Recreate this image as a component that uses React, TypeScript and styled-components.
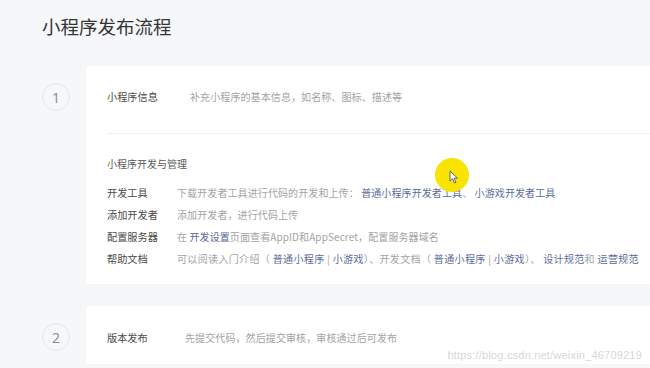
import React from 'react';
import styled, { createGlobalStyle } from 'styled-components';

const GlobalStyle = createGlobalStyle`
  html, body {
    margin: 0;
    padding: 0;
    background: #f6f7f9;
    overflow: hidden;
  }
  body {
    font-family: "Noto Sans CJK SC", "Noto Sans", sans-serif;
  }
`;

const Page = styled.div`
  position: relative;
  width: 650px;
  height: 368px;
  overflow: hidden;
  background: #f6f7f9;
`;

const Title = styled.h1`
  margin: 0;
  padding: 13px 0 0 42px;
  height: 26px;
  line-height: 26px;
  font-size: 18.5px;
  font-weight: 400;
  color: #353535;
`;

const Steps = styled.div`
  display: flex;
  flex-direction: column;
  gap: 22px;
  margin-top: 27px;
`;

const Step = styled.div`
  display: flex;
  align-items: flex-start;
`;

const IndexCol = styled.div`
  width: 86px;
  flex-shrink: 0;
  padding-top: 17px;
`;

const Circle = styled.div`
  margin-left: 42px;
  width: 26px;
  height: 26px;
  border: 1.5px solid #e4e5e8;
  border-radius: 50%;
  display: flex;
  align-items: center;
  justify-content: center;
  font-family: "Open Sans", "Noto Sans", sans-serif;
  font-size: 14px;
  color: #8a8a8a;
  background: #f6f7f9;
`;

const Card = styled.div<{ $top: number; $bottom: number }>`
  width: 620px;
  flex-shrink: 0;
  background: #fff;
  border-radius: 3px;
  padding: ${(p) => p.$top}px 0 ${(p) => p.$bottom}px 21px;
  box-shadow: 0 1px 2px rgba(0, 0, 0, 0.02);
`;

const Line = styled.div<{ $lh: number }>`
  display: flex;
  white-space: nowrap;
  line-height: ${(p) => p.$lh}px;
  font-size: 10px;
`;

const Label = styled.span<{ $w: number }>`
  width: ${(p) => p.$w}px;
  flex-shrink: 0;
  color: #4a4a4a;
  font-size: 10.2px;
`;

const Desc = styled.span<{ $ls?: number }>`
  color: #a3a3a3;
  letter-spacing: ${(p) => p.$ls ?? 0.1}px;
`;

const Link = styled.span`
  color: #5b6b99;
`;

const Divider = styled.div`
  height: 1px;
  background: #f0f0f2;
  margin: 27px 0 0 0;
`;

const SectionHead = styled.div`
  margin-top: 21px;
  line-height: 18px;
  font-size: 10px;
  color: #5a5a5a;
`;

const Rows = styled.div`
  margin-top: 9px;
`;

const Highlight = styled.div`
  position: absolute;
  left: 435px;
  top: 158px;
  width: 34px;
  height: 34px;
  border-radius: 50%;
  background: #f9e300;
`;

const Pointer = styled.svg`
  position: absolute;
  left: 449px;
  top: 170px;
`;

const Watermark = styled.div`
  position: absolute;
  right: 8px;
  bottom: 7px;
  font-family: "Liberation Sans", Arial, sans-serif;
  font-size: 11px;
  color: rgba(200, 200, 205, 0.75);
  letter-spacing: 0.2px;
`;

const App: React.FC = () => {
  return (
    <Page>
      <GlobalStyle />
      <Title>小程序发布流程</Title>
      <Steps>
        <Step>
          <IndexCol>
            <Circle>1</Circle>
          </IndexCol>
          <Card $top={22} $bottom={14}>
            <Line $lh={18}>
              <Label $w={83}>小程序信息</Label>
              <Desc>补充小程序的基本信息，如名称、图标、描述等</Desc>
            </Line>
            <Divider />
            <SectionHead>小程序开发与管理</SectionHead>
            <Rows>
              <Line $lh={22}>
                <Label $w={70}>开发工具</Label>
                <Desc>
                  下载开发者工具进行代码的开发和上传： <Link>普通小程序开发者工具</Link>、 <Link>小游戏开发者工具</Link>
                </Desc>
              </Line>
              <Line $lh={22}>
                <Label $w={70}>添加开发者</Label>
                <Desc>添加开发者，进行代码上传</Desc>
              </Line>
              <Line $lh={22}>
                <Label $w={70}>配置服务器</Label>
                <Desc>
                  在 <Link>开发设置</Link>页面查看AppID和AppSecret，配置服务器域名
                </Desc>
              </Line>
              <Line $lh={22}>
                <Label $w={70}>帮助文档</Label>
                <Desc $ls={0.35}>
                  可以阅读入门介绍（ <Link>普通小程序</Link> | <Link>小游戏</Link>）、开发文档（ <Link>普通小程序</Link> | <Link>小游戏</Link>）、 <Link>设计规范</Link>和 <Link>运营规范</Link>
                </Desc>
              </Line>
            </Rows>
          </Card>
        </Step>
        <Step>
          <IndexCol>
            <Circle>2</Circle>
          </IndexCol>
          <Card $top={23} $bottom={17}>
            <Line $lh={18}>
              <Label $w={78}>版本发布</Label>
              <Desc>先提交代码，然后提交审核，审核通过后可发布</Desc>
            </Line>
          </Card>
        </Step>
      </Steps>
      <Highlight />
      <Pointer width="10" height="14" viewBox="0 0 10 14">
        <path d="M1 1 L1 11 L3.5 8.8 L5.5 13 L7 12.3 L5 8.2 L8.5 8.2 Z" fill="#fff" stroke="#666" strokeWidth="1" strokeLinejoin="round" />
      </Pointer>
      <Watermark>https://blog.csdn.net/weixin_46709219</Watermark>
    </Page>
  );
};

export default App;
